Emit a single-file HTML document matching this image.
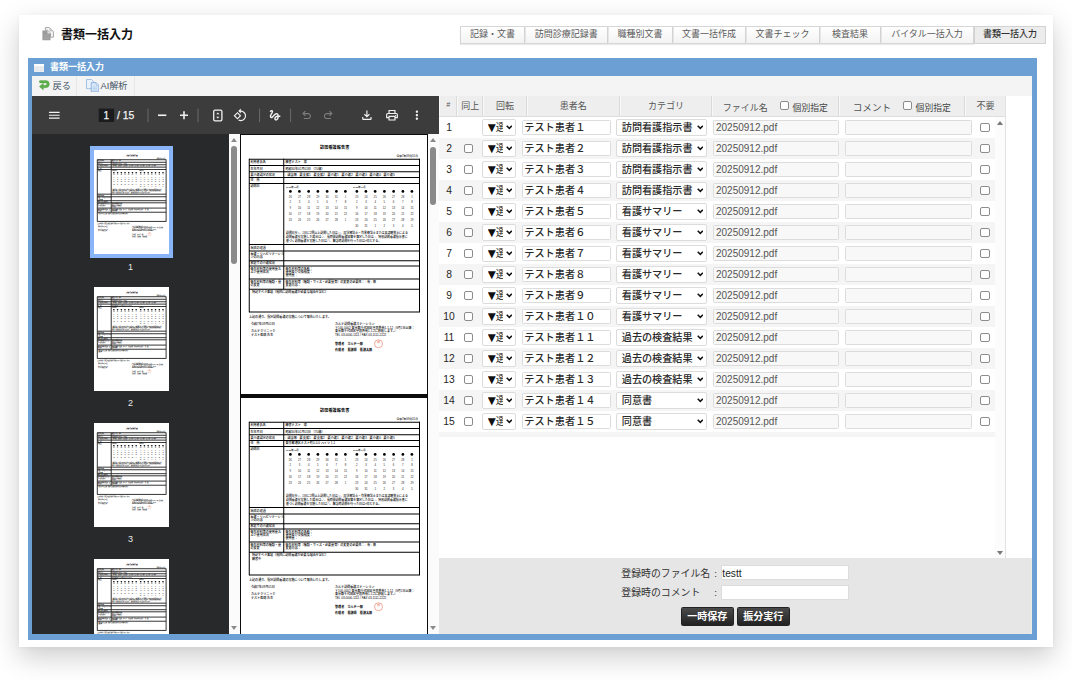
<!DOCTYPE html>
<html lang="ja">
<head>
<meta charset="utf-8">
<title>書類一括入力</title>
<style>

*{box-sizing:border-box;margin:0;padding:0}
html,body{width:1072px;height:680px;overflow:hidden;background:#fff}
body{font-family:"Liberation Sans","Noto Sans CJK JP",sans-serif;font-size:10px;color:#333;position:relative}
#card{position:absolute;left:19px;top:15px;width:1034px;height:632px;background:#fff;box-shadow:0 10px 26px rgba(0,0,0,.2),0 1px 4px rgba(0,0,0,.04)}
#titleicon{position:absolute;left:22.5px;top:11.5px;width:12px;height:14px}
#title{position:absolute;left:42px;top:11px;height:18px;line-height:18px;font-size:12px;font-weight:bold;color:#111;white-space:nowrap}
#tabs{position:absolute;left:0;top:11px;height:17.5px}
.tab{position:absolute;top:0;height:17.5px;line-height:15.5px;border:1px solid #d6d6d6;border-left-color:#e6e6e6;background:linear-gradient(#ffffff,#f3f3f3);font-size:9px;color:#5a5a5a;text-align:center;white-space:nowrap;box-shadow:0 1px 1px rgba(0,0,0,.08)}
.tab:first-child{border-left-color:#d6d6d6}
.tab.act{background:#ececec;color:#333;font-weight:500;border-color:#d2d2d2;box-shadow:none}
#panel{position:absolute;left:8.5px;top:42.5px;width:1009.5px;height:582.5px;background:#6c9fd3}
#panelicon{position:absolute;left:6.2px;top:6px;width:10px;height:8px}
#paneltitle{position:absolute;left:22.5px;top:2.5px;height:14px;line-height:14px;font-size:9px;font-weight:bold;color:#fff;white-space:nowrap}
#inner{position:absolute;left:4.5px;top:18.9px;width:1000px;height:558.1px;background:#fff;overflow:hidden}
#tbar{position:absolute;left:0;top:0;width:1000px;height:19.35px;background:#f4f4f4}
.tbtn{position:absolute;top:0;height:19.35px;border-right:1px solid #e7e7e7}
.tbtn .ico{position:absolute;display:block}
.tbtn .lbl{position:absolute;top:0;height:19.35px;line-height:20.3px;font-size:9.2px;color:#445566;white-space:nowrap}
#pdf{position:absolute;left:0;top:19.35px;width:406.75px;height:538.75px;background:#28292a;overflow:hidden}
#pdfbar{position:absolute;left:0;top:0;width:406.75px;height:38px;background:#3c3c3c}
#side{position:absolute;left:0;top:38px;width:197px;height:500.75px;background:#28292a;overflow:hidden}
.thumb{position:absolute;left:61.5px;width:75.3px;height:104px;background:#fff;overflow:hidden}
.thumb.cur{outline:4px solid #8ab4f8}
.thumbpage{position:absolute;left:0;top:0;width:746px;height:1036px;transform:scale(.1009);transform-origin:0 0}
.thumblabel{position:absolute;left:0;width:197px;text-align:center;font-size:9px;line-height:11px;height:11px;color:#e8e8e8}
.vscroll{position:absolute;top:38px;height:500.75px;width:10.75px;background:#fbfbfb}
.vscroll b{position:absolute;left:2.4px;width:6px;border-radius:3px;background:#8a8a8a;display:block}
.vscroll i{position:absolute;left:2px;width:0;height:0;border-left:3.4px solid transparent;border-right:3.4px solid transparent;display:block}
.vscroll i.up{top:4px;border-bottom:4px solid #8a8a8a}
.vscroll i.down{bottom:4px;border-top:4px solid #8a8a8a}
#sidescroll{left:197px}
#mainscroll{left:395.75px;width:11px}
#main{position:absolute;left:207.75px;top:38px;width:188px;height:500.75px;background:#0c0c0c;overflow:hidden}
.mpage{position:absolute;left:1.25px;width:186px;height:259px;background:#fff;overflow:hidden}
.mpage>.doc{transform:scale(.25);transform-origin:0 0}
/* document page drawn at 4x: 746 x 1036 */
.doc{position:absolute;left:0;top:0;width:746px;height:1036px;background:#fff;color:#000;font-weight:500;font-family:"Liberation Sans","Noto Sans CJK JP",sans-serif;font-size:12.2px;line-height:12px}
.doc .t{position:absolute;white-space:nowrap}
.doc .h{position:absolute;left:32px;width:683px;height:4px;background:#000}
.doc .v{position:absolute;width:4px;background:#000}
.thumbpage .doc .h{height:9px;margin-top:-2.5px;background:#222}
.thumbpage .doc .v{width:9px;margin-left:-2.5px;background:#222}
.thumbpage .doc .dot{width:16px;height:16px;border-radius:8px;margin:-2.5px 0 0 -2.5px}
.thumbpage .doc{font-weight:bold}
.doc .dot{position:absolute;width:11px;height:11px;border-radius:6px;background:#000}
.doc .n{position:absolute;width:30px;text-align:center;font-size:11px;color:#2a2420}
.doc .stamp{position:absolute;left:533px;top:818px;width:34px;height:34px;border:2px solid #e2583a;border-radius:17px;color:#e2583a;font-size:11px;line-height:14px;text-align:center;padding-top:2px}
/* table */
#tbl{position:absolute;left:406.75px;top:19.35px;width:567.5px;height:462.25px;border-right:1px solid #e2e2e2;overflow:hidden;background:#fff}
#thead{position:absolute;left:0;top:0;width:567px;height:21.25px;background:#eeeeee;border-bottom:1px solid #dddddd}
.th{position:absolute;top:0;height:20.25px;border-right:1px solid #dadada;border-left:1px solid #f8f8f8;font-size:9px;color:#555;white-space:nowrap}
.th span{position:absolute;white-space:nowrap}
.row{position:absolute;left:0;width:556px;height:21px}
.row.g{background:#f5f5f5}
.row .no{position:absolute;left:0;width:20.5px;text-align:center;top:0;height:21px;line-height:21px;font-size:10.3px;color:#262626}
.cb{position:absolute;width:9px;height:9px;border:1px solid #8c8c8c;border-radius:2px;background:#fff}
.sel{position:absolute;top:2.4px;height:16.4px;border:1px solid #dcdcdc;border-radius:2px;background:#fff;overflow:hidden;font-size:10px;line-height:16.2px;color:#2a2a2a;white-space:nowrap;font-weight:500}
.tri{font-family:"DejaVu Sans",sans-serif;font-size:10.4px;letter-spacing:-.2px}
.sel svg{position:absolute;right:2.7px;top:4.6px}
.inp{position:absolute;top:3.1px;height:14.8px;border:1px solid #dcdcdc;border-radius:1.5px;background:#fff;font-size:10.2px;line-height:14px;color:#2a2a2a;white-space:nowrap;overflow:hidden;font-weight:500}
.inp.dis{background:#f8f8f8;color:#555;font-weight:400;font-size:10px;top:3.3px;height:14.7px;line-height:14.4px}
#tscroll{position:absolute;left:556px;top:21.25px;width:11px;height:441px;background:#fcfcfc}
#tscroll i{position:absolute;left:2.2px;width:0;height:0;border-left:3.3px solid transparent;border-right:3.3px solid transparent;display:block}
#tscroll i.up{top:4.2px;border-bottom:4.4px solid #777}
#tscroll i.down{bottom:2.6px;border-top:4.6px solid #777}
#foot{position:absolute;left:406.75px;top:481.6px;width:593.25px;height:76.5px;background:#e6e6e6;border-right:1px solid #efece7}
#foot .fl{position:absolute;height:15px;line-height:15px;font-size:9.9px;color:#333;white-space:nowrap}
#foot .fi{position:absolute;left:281.75px;width:128.3px;height:14.6px;border:1px solid #dcdcdc;background:#fff;font-size:10.2px;line-height:14px;padding:.9px 0 0 .8px;color:#222}
.btn{position:absolute;top:49px;height:18.6px;line-height:17px;border:1px solid #222;border-radius:1.5px;background:linear-gradient(#4a4a4a,#222);color:#fff;font-weight:bold;font-size:10px;text-align:center;white-space:nowrap}

</style>
</head>
<body>
<div id="card">
  <div id="titleicon"><svg width="12" height="14" viewBox="0 0 12 14" style="display:block"><path d="M3.300 0.600H7.400L11.400 4.600V10.200H8.600V6.200L5.600 3.300H3.300z" fill="#fafafa" stroke="#a4a4a4" stroke-width="1" stroke-linejoin="round"/><path d="M7.400 0.600V4.600H11.400z" fill="#c9c9c9"/><path d="M0.400 3.400H5.500L8.500 6.400V13.300H0.400z" fill="#9b9b9b"/><path d="M5.500 3.400V6.400H8.500z" fill="#e3e3e3"/><path d="M1.600 8.300h5.600v.7H1.600zM1.600 10h5.600v.7H1.600zM1.600 11.600h5.600v.6H1.600z" fill="#a9a9a9"/></svg></div>
  <div id="title">書類一括入力</div>
  <div id="tabs">
<div class="tab" style="left:441px;width:65px">記録・文書</div>
<div class="tab" style="left:506px;width:82.5px">訪問診療記録書</div>
<div class="tab" style="left:588.5px;width:65.0px">職種別文書</div>
<div class="tab" style="left:653.5px;width:73.0px">文書一括作成</div>
<div class="tab" style="left:726.5px;width:74.0px">文書チェック</div>
<div class="tab" style="left:800.5px;width:61.0px">検査結果</div>
<div class="tab" style="left:861.5px;width:93.10000000000002px">バイタル一括入力</div>
<div class="tab act" style="left:954.6px;width:72.89999999999998px">書類一括入力</div>
  </div>
  <div id="panel">
    <div id="panelicon"><svg width="10.4" height="8" viewBox="0 0 10.4 8" style="display:block"><rect x="0" y="0" width="10.400" height="8" rx=".8" fill="#f2f4f7"/><rect x="0" y="0" width="10.400" height="1.800" rx=".8" fill="#ffffff"/><path d="M0 3.300h10.400M0 5.200h10.400M0 6.900h10.400" stroke="#d3d8df" stroke-width=".5" fill="none"/><path d="M3.200 2v6M6.800 2v6" stroke="#dde1e7" stroke-width=".5" fill="none"/></svg></div>
    <div id="paneltitle">書類一括入力</div>
    <div id="inner">
      <div id="tbar">
        <div class="tbtn" style="left:0;width:44.5px"><span class="ico" style="left:7px;top:4px"><svg width="11.4" height="10.6" viewBox="0 0 11.4 10.6" style="display:block"><path d="M1.500 0.400H6.700A3.700 3.700 0 0 1 6.700 7.800H4.300V9.900L0.300 6.500L4.300 3.200V5.200H6.700A1.150 1.150 0 0 0 6.700 2.900H1.500A1.250 1.250 0 0 1 1.500 0.400z" fill="#5fae4e" stroke="#4c9a3d" stroke-width=".35" stroke-linejoin="round"/></svg></span><span class="lbl" style="left:20.5px">戻る</span></div>
        <div class="tbtn" style="left:45.5px;width:57.2px"><span class="ico" style="left:8.600px;top:2.700px"><svg width="13.4" height="13.4" viewBox="0 0 13.4 13.4" style="display:block"><path d="M0.500 0.500h5l2.400 2.400v6.800H0.500z" fill="#eaf2fb" stroke="#8fb2dc" stroke-width=".8" stroke-linejoin="round"/><path d="M5.200 3.600h5l2.600 2.600v6.700H5.200z" fill="#d9e8f8" stroke="#7ea7d8" stroke-width=".8" stroke-linejoin="round"/><path d="M10.200 3.600v2.600h2.600" fill="#f4f8fd" stroke="#7ea7d8" stroke-width=".6" stroke-linejoin="round"/><path d="M6.600 8h4.600M6.600 9.600h4.600M6.600 11.200h4.600" stroke="#a8c4e6" stroke-width=".6"/></svg></span><span class="lbl" style="left:23px">AI解析</span></div>
      </div>
      <div id="pdf">
        <div id="pdfbar"><svg width="406.75" height="38" viewBox="0 0 406.75 38" style="position:absolute;left:0;top:0;display:block"><path transform="translate(15.20 12.15) scale(0.5917)" fill="#f1f1f1" d="M3 18h18v-2H3v2zm0-5h18v-2H3v2zm0-7v2h18V6H3z"/><rect x="66.75" y="12.6" width="15.3" height="13.4" fill="#191b1c"/><text x="74.400" y="22.800" text-anchor="middle" font-family="Liberation Sans, sans-serif" font-size="10" fill="#f4f4f4" stroke="#f4f4f4" stroke-width=".25">1</text><text x="85" y="22.800" font-family="Liberation Sans, sans-serif" font-size="10.300" fill="#f4f4f4" stroke="#f4f4f4" stroke-width=".25">/ 15</text><rect x="115.5" y="12.6" width="1" height="13.6" fill="#6b6b6b"/><rect x="165.5" y="12.6" width="1" height="13.6" fill="#6b6b6b"/><rect x="227.1" y="12.6" width="1" height="13.6" fill="#6b6b6b"/><rect x="258.1" y="12.6" width="1" height="13.6" fill="#6b6b6b"/><rect x="126" y="18.450" width="8.300" height="1.600" fill="#f1f1f1"/><path d="M148 18.450h3.200v-3.200h1.600v3.200h3.200v1.600h-3.200v3.200h-1.600v-3.200h-3.200z" fill="#f1f1f1"/><rect x="181.7" y="14.2" width="8.2" height="10.6" rx="1.3" fill="none" stroke="#f1f1f1" stroke-width="1.3"/><path d="M184.2 18.2l1.6-1.7 1.6 1.7zM184.2 20.8l1.6 1.7 1.6-1.7z" fill="#f1f1f1"/><path transform="translate(201.10 12.15) scale(0.5917)" fill="#f1f1f1" d="M7.34 6.41L.86 12.9l6.49 6.48 6.49-6.48-6.5-6.49zM3.69 12.9l3.66-3.66L11 12.9l-3.66 3.66-3.65-3.66zm15.67-6.26C17.61 4.88 15.3 4 13 4V.76L8.76 5 13 9.24V6c1.79 0 3.58.68 4.95 2.05 2.73 2.73 2.73 7.17 0 9.9C16.58 19.32 14.79 20 13 20c-.97 0-1.94-.21-2.84-.61l-1.49 1.49C10.02 21.62 11.51 22 13 22c2.3 0 4.61-.88 6.36-2.64 3.52-3.51 3.52-9.21 0-12.72z"/><path transform="translate(235.90 12.15) scale(0.5917)" fill="#f1f1f1" d="M4.59 6.89c.7-.71 1.4-1.35 1.71-1.22.5.2 0 1.03-.3 1.52-.25.42-2.86 3.89-2.86 6.31 0 1.28.48 2.34 1.34 2.98.75.56 1.74.73 2.64.46 1.07-.31 1.95-1.4 3.06-2.77 1.21-1.49 2.83-3.44 4.08-3.44 1.63 0 1.65 1.01 1.76 1.79-3.78.64-5.38 3.67-5.38 5.37 0 1.7 1.44 3.09 3.21 3.09 1.63 0 4.29-1.33 4.69-6.1H21v-2.5h-2.47c-.15-1.65-1.09-4.2-4.03-4.2-2.25 0-4.18 1.91-4.94 2.84-.58.73-2.06 2.48-2.29 2.72-.25.3-.68.84-1.11.84-.45 0-.72-.83-.36-1.92.35-1.09 1.4-2.86 1.85-3.52.78-1.14 1.3-1.92 1.3-3.28C8.95 3.69 7.31 3 6.44 3 5.12 3 3.97 4 3.72 4.25c-.36.36-.66.66-.88.93l1.75 1.71zm9.29 11.66c-.31 0-.74-.26-.74-.72 0-.6.73-2.2 2.87-2.76-.3 2.69-1.43 3.48-2.13 3.48z"/><path transform="translate(268.00 12.65) scale(0.5500)" fill="#7d7d7d" d="M7 19v-2h7.1q1.575 0 2.737-1 1.163-1 1.163-2.5t-1.163-2.5q-1.162-1-2.737-1H7.8l2.6 2.6L9 14 4 9l5-5 1.4 1.4L7.8 8h6.3q2.425 0 4.163 1.575Q20 11.15 20 13.5t-1.737 3.925Q16.525 19 14.1 19Z"/><path transform="translate(289.60 12.65) scale(0.5500)" fill="#7d7d7d" d="M9.9 19q-2.425 0-4.163-1.575Q4 15.85 4 13.5t1.737-3.925Q7.475 8 9.9 8h6.3l-2.6-2.6L15 4l5 5-5 5-1.4-1.4 2.6-2.6H9.9q-1.575 0-2.737 1Q6 12 6 13.5T7.163 16q1.162 1 2.737 1H17v2Z"/><path transform="translate(327.80 12.15) scale(0.5917)" fill="#f1f1f1" d="M12 16l-5-5 1.4-1.45 2.6 2.6V4h2v8.15l2.6-2.6L17 11Zm-6 4q-.825 0-1.412-.587Q4 18.825 4 18v-3h2v3h12v-3h2v3q0 .825-.587 1.413Q18.825 20 18 20Z"/><path transform="translate(352.90 12.15) scale(0.5917)" fill="#f1f1f1" d="M19 8h-1V3H6v5H5c-1.66 0-3 1.34-3 3v6h4v4h12v-4h4v-6c0-1.66-1.34-3-3-3zM8 5h8v3H8V5zm8 14H8v-4h8v4zm2-4v-2H6v2H4v-4c0-.55.45-1 1-1h14c.55 0 1 .45 1 1v4h-2zM18 11.5a1 1 0 100 2 1 1 0 000-2z"/><path transform="translate(377.80 12.15) scale(0.5917)" fill="#f1f1f1" d="M12 8c1.1 0 2-.9 2-2s-.9-2-2-2-2 .9-2 2 .9 2 2 2zm0 2c-1.1 0-2 .9-2 2s.9 2 2 2 2-.9 2-2-.9-2-2-2zm0 6c-1.1 0-2 .9-2 2s.9 2 2 2 2-.9 2-2-.9-2-2-2z"/></svg></div>
        <div id="side">
<div class="thumb cur" style="top:16.25px"><div class="thumbpage"><div class="doc"><div class="t" style="left:316px;top:43px;font-size:16.5px;font-weight:bold;letter-spacing:.3px">訪問看護報告書</div><div class="t" style="left:622px;top:78px;font-size:11px">令和7年09月01日</div><div class="h" style="top:94.5px"></div><div class="h" style="top:119.5px"></div><div class="h" style="top:144.5px"></div><div class="h" style="top:167.5px"></div><div class="h" style="top:191.5px"></div><div class="h" style="top:435.5px"></div><div class="h" style="top:461.5px"></div><div class="h" style="top:500.5px"></div><div class="h" style="top:521.5px"></div><div class="h" style="top:573.5px"></div><div class="h" style="top:614.5px"></div><div class="h" style="top:705.5px"></div><div class="v" style="left:30.5px;top:94.5px;height:614px"></div><div class="v" style="left:712px;top:94.5px;height:614px"></div><div class="v" style="left:168.5px;top:94.5px;height:523px"></div><div class="t" style="left:38px;top:102.5px;">利用者氏名</div><div class="t" style="left:38px;top:127.5px;">生年月日</div><div class="t" style="left:38px;top:151.5px;">要介護認定の状況</div><div class="t" style="left:38px;top:175px;">住　所</div><div class="t" style="left:38px;top:199px;">訪問日</div><div class="t" style="left:38px;top:444px;">病状の経過</div><div class="t" style="left:38px;top:470px;">看護・リハビリテーショ</div><div class="t" style="left:38px;top:483px;">ンの内容</div><div class="t" style="left:38px;top:506.5px;">家庭での介護状況</div><div class="t" style="left:38px;top:529px;">衛生材料等の使用量お</div><div class="t" style="left:38px;top:542px;">よび使用状況</div><div class="t" style="left:38px;top:582px;">衛生材料等の種類・量</div><div class="t" style="left:38px;top:595px;">の変更</div><div class="t" style="left:178px;top:102.5px;">練習テスト　様</div><div class="t" style="left:178px;top:127.5px;">昭和30年01月01日 （70歳）</div><div class="t" style="left:178px;top:151.5px;font-size:12.6px">□該当無 □要支援1 □要支援2 □要介護1 □要介護2 □要介護3 □要介護4 □要介護5</div><div class="t" style="left:180px;top:204px;font-size:9.5px">2025年08月</div><div class="t" style="left:448px;top:204px;font-size:9.5px">2025年09月</div><div class="dot" style="left:191.5px;top:220px"></div><div class="dot" style="left:228.3px;top:220px"></div><div class="dot" style="left:265.1px;top:220px"></div><div class="dot" style="left:301.9px;top:220px"></div><div class="dot" style="left:338.7px;top:220px"></div><div class="dot" style="left:375.5px;top:220px"></div><div class="dot" style="left:412.3px;top:220px"></div><div class="n" style="left:182.0px;top:240px">26</div><div class="n" style="left:218.8px;top:240px">27</div><div class="n" style="left:255.6px;top:240px">28</div><div class="n" style="left:292.4px;top:240px">29</div><div class="n" style="left:329.2px;top:240px">30</div><div class="n" style="left:366.0px;top:240px">31</div><div class="n" style="left:402.8px;top:240px">1</div><div class="n" style="left:182.0px;top:263px">2</div><div class="n" style="left:218.8px;top:263px">3</div><div class="n" style="left:255.6px;top:263px">4</div><div class="n" style="left:292.4px;top:263px">5</div><div class="n" style="left:329.2px;top:263px">6</div><div class="n" style="left:366.0px;top:263px">7</div><div class="n" style="left:402.8px;top:263px">8</div><div class="n" style="left:182.0px;top:286px">9</div><div class="n" style="left:218.8px;top:286px">10</div><div class="n" style="left:255.6px;top:286px">11</div><div class="n" style="left:292.4px;top:286px">12</div><div class="n" style="left:329.2px;top:286px">13</div><div class="n" style="left:366.0px;top:286px">14</div><div class="n" style="left:402.8px;top:286px">15</div><div class="n" style="left:182.0px;top:310px">16</div><div class="n" style="left:218.8px;top:310px">17</div><div class="n" style="left:255.6px;top:310px">18</div><div class="n" style="left:292.4px;top:310px">19</div><div class="n" style="left:329.2px;top:310px">20</div><div class="n" style="left:366.0px;top:310px">21</div><div class="n" style="left:402.8px;top:310px">22</div><div class="n" style="left:182.0px;top:334px">23</div><div class="n" style="left:218.8px;top:334px">24</div><div class="n" style="left:255.6px;top:334px">25</div><div class="n" style="left:292.4px;top:334px">26</div><div class="n" style="left:329.2px;top:334px">27</div><div class="n" style="left:366.0px;top:334px">28</div><div class="n" style="left:402.8px;top:334px">1</div><div class="dot" style="left:457.5px;top:220px"></div><div class="dot" style="left:494.3px;top:220px"></div><div class="dot" style="left:531.1px;top:220px"></div><div class="dot" style="left:567.9px;top:220px"></div><div class="dot" style="left:604.7px;top:220px"></div><div class="dot" style="left:641.5px;top:220px"></div><div class="dot" style="left:678.3px;top:220px"></div><div class="n" style="left:448.0px;top:240px">23</div><div class="n" style="left:484.8px;top:240px">24</div><div class="n" style="left:521.6px;top:240px">25</div><div class="n" style="left:558.4px;top:240px">26</div><div class="n" style="left:595.2px;top:240px">27</div><div class="n" style="left:632.0px;top:240px">28</div><div class="n" style="left:668.8px;top:240px">1</div><div class="n" style="left:448.0px;top:263px">2</div><div class="n" style="left:484.8px;top:263px">3</div><div class="n" style="left:521.6px;top:263px">4</div><div class="n" style="left:558.4px;top:263px">5</div><div class="n" style="left:595.2px;top:263px">6</div><div class="n" style="left:632.0px;top:263px">7</div><div class="n" style="left:668.8px;top:263px">8</div><div class="n" style="left:448.0px;top:286px">9</div><div class="n" style="left:484.8px;top:286px">10</div><div class="n" style="left:521.6px;top:286px">11</div><div class="n" style="left:558.4px;top:286px">12</div><div class="n" style="left:595.2px;top:286px">13</div><div class="n" style="left:632.0px;top:286px">14</div><div class="n" style="left:668.8px;top:286px">15</div><div class="n" style="left:448.0px;top:310px">16</div><div class="n" style="left:484.8px;top:310px">17</div><div class="n" style="left:521.6px;top:310px">18</div><div class="n" style="left:558.4px;top:310px">19</div><div class="n" style="left:595.2px;top:310px">20</div><div class="n" style="left:632.0px;top:310px">21</div><div class="n" style="left:668.8px;top:310px">22</div><div class="n" style="left:448.0px;top:334px">23</div><div class="n" style="left:484.8px;top:334px">24</div><div class="n" style="left:521.6px;top:334px">25</div><div class="n" style="left:558.4px;top:334px">26</div><div class="n" style="left:595.2px;top:334px">27</div><div class="n" style="left:632.0px;top:334px">28</div><div class="n" style="left:668.8px;top:334px">29</div><div class="n" style="left:448.0px;top:359px">30</div><div class="n" style="left:484.8px;top:359px">31</div><div class="n" style="left:521.6px;top:359px">1</div><div class="n" style="left:558.4px;top:359px">2</div><div class="n" style="left:595.2px;top:359px">3</div><div class="n" style="left:632.0px;top:359px">4</div><div class="n" style="left:668.8px;top:359px">5</div><div class="t" style="left:180px;top:385px;font-size:11.7px">訪問日を○、1日に2回以上訪問した日は◎、理学療法士・作業療法士または言語聴覚士による</div><div class="t" style="left:180px;top:401px;font-size:11.7px">訪問看護を実施した場合は◇、長時間訪問看護加算を算定した日は□、特別訪問看護指示書に</div><div class="t" style="left:180px;top:416px;font-size:11.7px">基づく訪問看護を実施した日は△、緊急時訪問を行った日は×印とする。</div><div class="t" style="left:178px;top:529px;">衛生材料等の名称：</div><div class="t" style="left:178px;top:542px;">使用及び交換頻度：</div><div class="t" style="left:178px;top:555px;">使用量：</div><div class="t" style="left:178px;top:582px;">衛生材料等（種類・サイズ・必要量等）の変更の必要性： □有 □無</div><div class="t" style="left:178px;top:595px;">変更内容：</div><div class="t" style="left:44px;top:623px;">特記すべき事項（頻回に訪問看護が必要な理由を含む）</div><div class="t" style="left:32px;top:723px;font-size:12.2px">上記の通り、指定訪問看護の実施について報告いたします。</div><div class="t" style="left:40px;top:751px;">令和7年09月01日</div><div class="t" style="left:40px;top:779px;">カルテクリニック</div><div class="t" style="left:40px;top:794px;">テスト医師 先生</div><div class="t" style="left:376px;top:751px;">カルテ訪問看護ステーション</div><div class="t" style="left:376px;top:765px;font-size:12px">〒100-0002 東京都千代田区皇居外苑1-1-12（9月1日以降：</div><div class="t" style="left:376px;top:779px;font-size:12px">東京都千代田区皇居外苑1-1-2に移転します。）</div><div class="t" style="left:376px;top:794px;font-size:12px">TEL 03-0000-1111 / FAX 03-1111-2222</div><div class="t" style="left:376px;top:830px;font-size:12.4px;font-weight:bold">管理者　カルテ一郎</div><div class="t" style="left:376px;top:852px;font-size:12.4px;font-weight:bold">作成者　看護師　看護太郎</div><div class="stamp">印</div></div></div></div>
<div class="thumblabel" style="top:127.85px">1</div>
<div class="thumb" style="top:153.05px"><div class="thumbpage"><div class="doc"><div class="t" style="left:316px;top:43px;font-size:16.5px;font-weight:bold;letter-spacing:.3px">訪問看護報告書</div><div class="t" style="left:622px;top:78px;font-size:11px">令和7年09月01日</div><div class="h" style="top:94.5px"></div><div class="h" style="top:119.5px"></div><div class="h" style="top:144.5px"></div><div class="h" style="top:167.5px"></div><div class="h" style="top:191.5px"></div><div class="h" style="top:435.5px"></div><div class="h" style="top:461.5px"></div><div class="h" style="top:500.5px"></div><div class="h" style="top:521.5px"></div><div class="h" style="top:573.5px"></div><div class="h" style="top:614.5px"></div><div class="h" style="top:705.5px"></div><div class="v" style="left:30.5px;top:94.5px;height:614px"></div><div class="v" style="left:712px;top:94.5px;height:614px"></div><div class="v" style="left:168.5px;top:94.5px;height:523px"></div><div class="t" style="left:38px;top:102.5px;">利用者氏名</div><div class="t" style="left:38px;top:127.5px;">生年月日</div><div class="t" style="left:38px;top:151.5px;">要介護認定の状況</div><div class="t" style="left:38px;top:175px;">住　所</div><div class="t" style="left:38px;top:199px;">訪問日</div><div class="t" style="left:38px;top:444px;">病状の経過</div><div class="t" style="left:38px;top:470px;">看護・リハビリテーショ</div><div class="t" style="left:38px;top:483px;">ンの内容</div><div class="t" style="left:38px;top:506.5px;">家庭での介護状況</div><div class="t" style="left:38px;top:529px;">衛生材料等の使用量お</div><div class="t" style="left:38px;top:542px;">よび使用状況</div><div class="t" style="left:38px;top:582px;">衛生材料等の種類・量</div><div class="t" style="left:38px;top:595px;">の変更</div><div class="t" style="left:178px;top:102.5px;">練習テスト　様</div><div class="t" style="left:178px;top:127.5px;">昭和30年01月01日 （70歳）</div><div class="t" style="left:178px;top:151.5px;font-size:12.6px">□該当無 □要支援1 □要支援2 □要介護1 □要介護2 □要介護3 □要介護4 □要介護5</div><div class="t" style="left:178px;top:175px;">東京都港区テスト町0-0-0 ハイツ 1-1</div><div class="t" style="left:180px;top:204px;font-size:9.5px">2025年08月</div><div class="t" style="left:448px;top:204px;font-size:9.5px">2025年09月</div><div class="dot" style="left:191.5px;top:220px"></div><div class="dot" style="left:228.3px;top:220px"></div><div class="dot" style="left:265.1px;top:220px"></div><div class="dot" style="left:301.9px;top:220px"></div><div class="dot" style="left:338.7px;top:220px"></div><div class="dot" style="left:375.5px;top:220px"></div><div class="dot" style="left:412.3px;top:220px"></div><div class="n" style="left:182.0px;top:240px">26</div><div class="n" style="left:218.8px;top:240px">27</div><div class="n" style="left:255.6px;top:240px">28</div><div class="n" style="left:292.4px;top:240px">29</div><div class="n" style="left:329.2px;top:240px">30</div><div class="n" style="left:366.0px;top:240px">31</div><div class="n" style="left:402.8px;top:240px">1</div><div class="n" style="left:182.0px;top:263px">2</div><div class="n" style="left:218.8px;top:263px">3</div><div class="n" style="left:255.6px;top:263px">4</div><div class="n" style="left:292.4px;top:263px">5</div><div class="n" style="left:329.2px;top:263px">6</div><div class="n" style="left:366.0px;top:263px">7</div><div class="n" style="left:402.8px;top:263px">8</div><div class="n" style="left:182.0px;top:286px">9</div><div class="n" style="left:218.8px;top:286px">10</div><div class="n" style="left:255.6px;top:286px">11</div><div class="n" style="left:292.4px;top:286px">12</div><div class="n" style="left:329.2px;top:286px">13</div><div class="n" style="left:366.0px;top:286px">14</div><div class="n" style="left:402.8px;top:286px">15</div><div class="n" style="left:182.0px;top:310px">16</div><div class="n" style="left:218.8px;top:310px">17</div><div class="n" style="left:255.6px;top:310px">18</div><div class="n" style="left:292.4px;top:310px">19</div><div class="n" style="left:329.2px;top:310px">20</div><div class="n" style="left:366.0px;top:310px">21</div><div class="n" style="left:402.8px;top:310px">22</div><div class="n" style="left:182.0px;top:334px">23</div><div class="n" style="left:218.8px;top:334px">24</div><div class="n" style="left:255.6px;top:334px">25</div><div class="n" style="left:292.4px;top:334px">26</div><div class="n" style="left:329.2px;top:334px">27</div><div class="n" style="left:366.0px;top:334px">28</div><div class="n" style="left:402.8px;top:334px">1</div><div class="dot" style="left:457.5px;top:220px"></div><div class="dot" style="left:494.3px;top:220px"></div><div class="dot" style="left:531.1px;top:220px"></div><div class="dot" style="left:567.9px;top:220px"></div><div class="dot" style="left:604.7px;top:220px"></div><div class="dot" style="left:641.5px;top:220px"></div><div class="dot" style="left:678.3px;top:220px"></div><div class="n" style="left:448.0px;top:240px">23</div><div class="n" style="left:484.8px;top:240px">24</div><div class="n" style="left:521.6px;top:240px">25</div><div class="n" style="left:558.4px;top:240px">26</div><div class="n" style="left:595.2px;top:240px">27</div><div class="n" style="left:632.0px;top:240px">28</div><div class="n" style="left:668.8px;top:240px">1</div><div class="n" style="left:448.0px;top:263px">2</div><div class="n" style="left:484.8px;top:263px">3</div><div class="n" style="left:521.6px;top:263px">4</div><div class="n" style="left:558.4px;top:263px">5</div><div class="n" style="left:595.2px;top:263px">6</div><div class="n" style="left:632.0px;top:263px">7</div><div class="n" style="left:668.8px;top:263px">8</div><div class="n" style="left:448.0px;top:286px">9</div><div class="n" style="left:484.8px;top:286px">10</div><div class="n" style="left:521.6px;top:286px">11</div><div class="n" style="left:558.4px;top:286px">12</div><div class="n" style="left:595.2px;top:286px">13</div><div class="n" style="left:632.0px;top:286px">14</div><div class="n" style="left:668.8px;top:286px">15</div><div class="n" style="left:448.0px;top:310px">16</div><div class="n" style="left:484.8px;top:310px">17</div><div class="n" style="left:521.6px;top:310px">18</div><div class="n" style="left:558.4px;top:310px">19</div><div class="n" style="left:595.2px;top:310px">20</div><div class="n" style="left:632.0px;top:310px">21</div><div class="n" style="left:668.8px;top:310px">22</div><div class="n" style="left:448.0px;top:334px">23</div><div class="n" style="left:484.8px;top:334px">24</div><div class="n" style="left:521.6px;top:334px">25</div><div class="n" style="left:558.4px;top:334px">26</div><div class="n" style="left:595.2px;top:334px">27</div><div class="n" style="left:632.0px;top:334px">28</div><div class="n" style="left:668.8px;top:334px">29</div><div class="n" style="left:448.0px;top:359px">30</div><div class="n" style="left:484.8px;top:359px">31</div><div class="n" style="left:521.6px;top:359px">1</div><div class="n" style="left:558.4px;top:359px">2</div><div class="n" style="left:595.2px;top:359px">3</div><div class="n" style="left:632.0px;top:359px">4</div><div class="n" style="left:668.8px;top:359px">5</div><div class="t" style="left:180px;top:385px;font-size:11.7px">訪問日を○、1日に2回以上訪問した日は◎、理学療法士・作業療法士または言語聴覚士による</div><div class="t" style="left:180px;top:401px;font-size:11.7px">訪問看護を実施した場合は◇、長時間訪問看護加算を算定した日は□、特別訪問看護指示書に</div><div class="t" style="left:180px;top:416px;font-size:11.7px">基づく訪問看護を実施した日は△、緊急時訪問を行った日は×印とする。</div><div class="t" style="left:178px;top:529px;">衛生材料等の名称：</div><div class="t" style="left:178px;top:542px;">使用及び交換頻度：</div><div class="t" style="left:178px;top:555px;">使用量：</div><div class="t" style="left:178px;top:582px;">衛生材料等（種類・サイズ・必要量等）の変更の必要性： □有 □無</div><div class="t" style="left:178px;top:595px;">変更内容：</div><div class="t" style="left:44px;top:623px;">特記すべき事項（頻回に訪問看護が必要な理由を含む）</div><div class="t" style="left:44px;top:637px;">練習中</div><div class="t" style="left:32px;top:723px;font-size:12.2px">上記の通り、指定訪問看護の実施について報告いたします。</div><div class="t" style="left:40px;top:751px;">令和7年09月01日</div><div class="t" style="left:40px;top:779px;">カルテクリニック</div><div class="t" style="left:40px;top:794px;">テスト医師 先生</div><div class="t" style="left:376px;top:751px;">カルテ訪問看護ステーション</div><div class="t" style="left:376px;top:765px;font-size:12px">〒100-0002 東京都千代田区皇居外苑1-1-12（9月1日以降：</div><div class="t" style="left:376px;top:779px;font-size:12px">東京都千代田区皇居外苑1-1-2に移転します。）</div><div class="t" style="left:376px;top:794px;font-size:12px">TEL 03-0000-1111 / FAX 03-1111-2222</div><div class="t" style="left:376px;top:830px;font-size:12.4px;font-weight:bold">管理者　カルテ一郎</div><div class="t" style="left:376px;top:852px;font-size:12.4px;font-weight:bold">作成者　看護師　看護太郎</div><div class="stamp">印</div></div></div></div>
<div class="thumblabel" style="top:264.65px">2</div>
<div class="thumb" style="top:289.05px"><div class="thumbpage"><div class="doc"><div class="t" style="left:316px;top:43px;font-size:16.5px;font-weight:bold;letter-spacing:.3px">訪問看護報告書</div><div class="t" style="left:622px;top:78px;font-size:11px">令和7年09月01日</div><div class="h" style="top:94.5px"></div><div class="h" style="top:119.5px"></div><div class="h" style="top:144.5px"></div><div class="h" style="top:167.5px"></div><div class="h" style="top:191.5px"></div><div class="h" style="top:435.5px"></div><div class="h" style="top:461.5px"></div><div class="h" style="top:500.5px"></div><div class="h" style="top:521.5px"></div><div class="h" style="top:573.5px"></div><div class="h" style="top:614.5px"></div><div class="h" style="top:705.5px"></div><div class="v" style="left:30.5px;top:94.5px;height:614px"></div><div class="v" style="left:712px;top:94.5px;height:614px"></div><div class="v" style="left:168.5px;top:94.5px;height:523px"></div><div class="t" style="left:38px;top:102.5px;">利用者氏名</div><div class="t" style="left:38px;top:127.5px;">生年月日</div><div class="t" style="left:38px;top:151.5px;">要介護認定の状況</div><div class="t" style="left:38px;top:175px;">住　所</div><div class="t" style="left:38px;top:199px;">訪問日</div><div class="t" style="left:38px;top:444px;">病状の経過</div><div class="t" style="left:38px;top:470px;">看護・リハビリテーショ</div><div class="t" style="left:38px;top:483px;">ンの内容</div><div class="t" style="left:38px;top:506.5px;">家庭での介護状況</div><div class="t" style="left:38px;top:529px;">衛生材料等の使用量お</div><div class="t" style="left:38px;top:542px;">よび使用状況</div><div class="t" style="left:38px;top:582px;">衛生材料等の種類・量</div><div class="t" style="left:38px;top:595px;">の変更</div><div class="t" style="left:178px;top:102.5px;">練習テスト　様</div><div class="t" style="left:178px;top:127.5px;">昭和30年01月01日 （70歳）</div><div class="t" style="left:178px;top:151.5px;font-size:12.6px">□該当無 □要支援1 □要支援2 □要介護1 □要介護2 □要介護3 □要介護4 □要介護5</div><div class="t" style="left:180px;top:204px;font-size:9.5px">2025年08月</div><div class="t" style="left:448px;top:204px;font-size:9.5px">2025年09月</div><div class="dot" style="left:191.5px;top:220px"></div><div class="dot" style="left:228.3px;top:220px"></div><div class="dot" style="left:265.1px;top:220px"></div><div class="dot" style="left:301.9px;top:220px"></div><div class="dot" style="left:338.7px;top:220px"></div><div class="dot" style="left:375.5px;top:220px"></div><div class="dot" style="left:412.3px;top:220px"></div><div class="n" style="left:182.0px;top:240px">26</div><div class="n" style="left:218.8px;top:240px">27</div><div class="n" style="left:255.6px;top:240px">28</div><div class="n" style="left:292.4px;top:240px">29</div><div class="n" style="left:329.2px;top:240px">30</div><div class="n" style="left:366.0px;top:240px">31</div><div class="n" style="left:402.8px;top:240px">1</div><div class="n" style="left:182.0px;top:263px">2</div><div class="n" style="left:218.8px;top:263px">3</div><div class="n" style="left:255.6px;top:263px">4</div><div class="n" style="left:292.4px;top:263px">5</div><div class="n" style="left:329.2px;top:263px">6</div><div class="n" style="left:366.0px;top:263px">7</div><div class="n" style="left:402.8px;top:263px">8</div><div class="n" style="left:182.0px;top:286px">9</div><div class="n" style="left:218.8px;top:286px">10</div><div class="n" style="left:255.6px;top:286px">11</div><div class="n" style="left:292.4px;top:286px">12</div><div class="n" style="left:329.2px;top:286px">13</div><div class="n" style="left:366.0px;top:286px">14</div><div class="n" style="left:402.8px;top:286px">15</div><div class="n" style="left:182.0px;top:310px">16</div><div class="n" style="left:218.8px;top:310px">17</div><div class="n" style="left:255.6px;top:310px">18</div><div class="n" style="left:292.4px;top:310px">19</div><div class="n" style="left:329.2px;top:310px">20</div><div class="n" style="left:366.0px;top:310px">21</div><div class="n" style="left:402.8px;top:310px">22</div><div class="n" style="left:182.0px;top:334px">23</div><div class="n" style="left:218.8px;top:334px">24</div><div class="n" style="left:255.6px;top:334px">25</div><div class="n" style="left:292.4px;top:334px">26</div><div class="n" style="left:329.2px;top:334px">27</div><div class="n" style="left:366.0px;top:334px">28</div><div class="n" style="left:402.8px;top:334px">1</div><div class="dot" style="left:457.5px;top:220px"></div><div class="dot" style="left:494.3px;top:220px"></div><div class="dot" style="left:531.1px;top:220px"></div><div class="dot" style="left:567.9px;top:220px"></div><div class="dot" style="left:604.7px;top:220px"></div><div class="dot" style="left:641.5px;top:220px"></div><div class="dot" style="left:678.3px;top:220px"></div><div class="n" style="left:448.0px;top:240px">23</div><div class="n" style="left:484.8px;top:240px">24</div><div class="n" style="left:521.6px;top:240px">25</div><div class="n" style="left:558.4px;top:240px">26</div><div class="n" style="left:595.2px;top:240px">27</div><div class="n" style="left:632.0px;top:240px">28</div><div class="n" style="left:668.8px;top:240px">1</div><div class="n" style="left:448.0px;top:263px">2</div><div class="n" style="left:484.8px;top:263px">3</div><div class="n" style="left:521.6px;top:263px">4</div><div class="n" style="left:558.4px;top:263px">5</div><div class="n" style="left:595.2px;top:263px">6</div><div class="n" style="left:632.0px;top:263px">7</div><div class="n" style="left:668.8px;top:263px">8</div><div class="n" style="left:448.0px;top:286px">9</div><div class="n" style="left:484.8px;top:286px">10</div><div class="n" style="left:521.6px;top:286px">11</div><div class="n" style="left:558.4px;top:286px">12</div><div class="n" style="left:595.2px;top:286px">13</div><div class="n" style="left:632.0px;top:286px">14</div><div class="n" style="left:668.8px;top:286px">15</div><div class="n" style="left:448.0px;top:310px">16</div><div class="n" style="left:484.8px;top:310px">17</div><div class="n" style="left:521.6px;top:310px">18</div><div class="n" style="left:558.4px;top:310px">19</div><div class="n" style="left:595.2px;top:310px">20</div><div class="n" style="left:632.0px;top:310px">21</div><div class="n" style="left:668.8px;top:310px">22</div><div class="n" style="left:448.0px;top:334px">23</div><div class="n" style="left:484.8px;top:334px">24</div><div class="n" style="left:521.6px;top:334px">25</div><div class="n" style="left:558.4px;top:334px">26</div><div class="n" style="left:595.2px;top:334px">27</div><div class="n" style="left:632.0px;top:334px">28</div><div class="n" style="left:668.8px;top:334px">29</div><div class="n" style="left:448.0px;top:359px">30</div><div class="n" style="left:484.8px;top:359px">31</div><div class="n" style="left:521.6px;top:359px">1</div><div class="n" style="left:558.4px;top:359px">2</div><div class="n" style="left:595.2px;top:359px">3</div><div class="n" style="left:632.0px;top:359px">4</div><div class="n" style="left:668.8px;top:359px">5</div><div class="t" style="left:180px;top:385px;font-size:11.7px">訪問日を○、1日に2回以上訪問した日は◎、理学療法士・作業療法士または言語聴覚士による</div><div class="t" style="left:180px;top:401px;font-size:11.7px">訪問看護を実施した場合は◇、長時間訪問看護加算を算定した日は□、特別訪問看護指示書に</div><div class="t" style="left:180px;top:416px;font-size:11.7px">基づく訪問看護を実施した日は△、緊急時訪問を行った日は×印とする。</div><div class="t" style="left:178px;top:529px;">衛生材料等の名称：</div><div class="t" style="left:178px;top:542px;">使用及び交換頻度：</div><div class="t" style="left:178px;top:555px;">使用量：</div><div class="t" style="left:178px;top:582px;">衛生材料等（種類・サイズ・必要量等）の変更の必要性： □有 □無</div><div class="t" style="left:178px;top:595px;">変更内容：</div><div class="t" style="left:44px;top:623px;">特記すべき事項（頻回に訪問看護が必要な理由を含む）</div><div class="t" style="left:32px;top:723px;font-size:12.2px">上記の通り、指定訪問看護の実施について報告いたします。</div><div class="t" style="left:40px;top:751px;">令和7年09月01日</div><div class="t" style="left:40px;top:779px;">カルテクリニック</div><div class="t" style="left:40px;top:794px;">テスト医師 先生</div><div class="t" style="left:376px;top:751px;">カルテ訪問看護ステーション</div><div class="t" style="left:376px;top:765px;font-size:12px">〒100-0002 東京都千代田区皇居外苑1-1-12（9月1日以降：</div><div class="t" style="left:376px;top:779px;font-size:12px">東京都千代田区皇居外苑1-1-2に移転します。）</div><div class="t" style="left:376px;top:794px;font-size:12px">TEL 03-0000-1111 / FAX 03-1111-2222</div><div class="t" style="left:376px;top:830px;font-size:12.4px;font-weight:bold">管理者　カルテ一郎</div><div class="t" style="left:376px;top:852px;font-size:12.4px;font-weight:bold">作成者　看護師　看護太郎</div><div class="stamp">印</div></div></div></div>
<div class="thumblabel" style="top:400.65px">3</div>
<div class="thumb" style="top:425.05px"><div class="thumbpage"><div class="doc"><div class="t" style="left:316px;top:43px;font-size:16.5px;font-weight:bold;letter-spacing:.3px">訪問看護報告書</div><div class="t" style="left:622px;top:78px;font-size:11px">令和7年09月01日</div><div class="h" style="top:94.5px"></div><div class="h" style="top:119.5px"></div><div class="h" style="top:144.5px"></div><div class="h" style="top:167.5px"></div><div class="h" style="top:191.5px"></div><div class="h" style="top:435.5px"></div><div class="h" style="top:461.5px"></div><div class="h" style="top:500.5px"></div><div class="h" style="top:521.5px"></div><div class="h" style="top:573.5px"></div><div class="h" style="top:614.5px"></div><div class="h" style="top:705.5px"></div><div class="v" style="left:30.5px;top:94.5px;height:614px"></div><div class="v" style="left:712px;top:94.5px;height:614px"></div><div class="v" style="left:168.5px;top:94.5px;height:523px"></div><div class="t" style="left:38px;top:102.5px;">利用者氏名</div><div class="t" style="left:38px;top:127.5px;">生年月日</div><div class="t" style="left:38px;top:151.5px;">要介護認定の状況</div><div class="t" style="left:38px;top:175px;">住　所</div><div class="t" style="left:38px;top:199px;">訪問日</div><div class="t" style="left:38px;top:444px;">病状の経過</div><div class="t" style="left:38px;top:470px;">看護・リハビリテーショ</div><div class="t" style="left:38px;top:483px;">ンの内容</div><div class="t" style="left:38px;top:506.5px;">家庭での介護状況</div><div class="t" style="left:38px;top:529px;">衛生材料等の使用量お</div><div class="t" style="left:38px;top:542px;">よび使用状況</div><div class="t" style="left:38px;top:582px;">衛生材料等の種類・量</div><div class="t" style="left:38px;top:595px;">の変更</div><div class="t" style="left:178px;top:102.5px;">練習テスト　様</div><div class="t" style="left:178px;top:127.5px;">昭和30年01月01日 （70歳）</div><div class="t" style="left:178px;top:151.5px;font-size:12.6px">□該当無 □要支援1 □要支援2 □要介護1 □要介護2 □要介護3 □要介護4 □要介護5</div><div class="t" style="left:178px;top:175px;">東京都港区テスト町0-0-0 ハイツ 1-1</div><div class="t" style="left:180px;top:204px;font-size:9.5px">2025年08月</div><div class="t" style="left:448px;top:204px;font-size:9.5px">2025年09月</div><div class="dot" style="left:191.5px;top:220px"></div><div class="dot" style="left:228.3px;top:220px"></div><div class="dot" style="left:265.1px;top:220px"></div><div class="dot" style="left:301.9px;top:220px"></div><div class="dot" style="left:338.7px;top:220px"></div><div class="dot" style="left:375.5px;top:220px"></div><div class="dot" style="left:412.3px;top:220px"></div><div class="n" style="left:182.0px;top:240px">26</div><div class="n" style="left:218.8px;top:240px">27</div><div class="n" style="left:255.6px;top:240px">28</div><div class="n" style="left:292.4px;top:240px">29</div><div class="n" style="left:329.2px;top:240px">30</div><div class="n" style="left:366.0px;top:240px">31</div><div class="n" style="left:402.8px;top:240px">1</div><div class="n" style="left:182.0px;top:263px">2</div><div class="n" style="left:218.8px;top:263px">3</div><div class="n" style="left:255.6px;top:263px">4</div><div class="n" style="left:292.4px;top:263px">5</div><div class="n" style="left:329.2px;top:263px">6</div><div class="n" style="left:366.0px;top:263px">7</div><div class="n" style="left:402.8px;top:263px">8</div><div class="n" style="left:182.0px;top:286px">9</div><div class="n" style="left:218.8px;top:286px">10</div><div class="n" style="left:255.6px;top:286px">11</div><div class="n" style="left:292.4px;top:286px">12</div><div class="n" style="left:329.2px;top:286px">13</div><div class="n" style="left:366.0px;top:286px">14</div><div class="n" style="left:402.8px;top:286px">15</div><div class="n" style="left:182.0px;top:310px">16</div><div class="n" style="left:218.8px;top:310px">17</div><div class="n" style="left:255.6px;top:310px">18</div><div class="n" style="left:292.4px;top:310px">19</div><div class="n" style="left:329.2px;top:310px">20</div><div class="n" style="left:366.0px;top:310px">21</div><div class="n" style="left:402.8px;top:310px">22</div><div class="n" style="left:182.0px;top:334px">23</div><div class="n" style="left:218.8px;top:334px">24</div><div class="n" style="left:255.6px;top:334px">25</div><div class="n" style="left:292.4px;top:334px">26</div><div class="n" style="left:329.2px;top:334px">27</div><div class="n" style="left:366.0px;top:334px">28</div><div class="n" style="left:402.8px;top:334px">1</div><div class="dot" style="left:457.5px;top:220px"></div><div class="dot" style="left:494.3px;top:220px"></div><div class="dot" style="left:531.1px;top:220px"></div><div class="dot" style="left:567.9px;top:220px"></div><div class="dot" style="left:604.7px;top:220px"></div><div class="dot" style="left:641.5px;top:220px"></div><div class="dot" style="left:678.3px;top:220px"></div><div class="n" style="left:448.0px;top:240px">23</div><div class="n" style="left:484.8px;top:240px">24</div><div class="n" style="left:521.6px;top:240px">25</div><div class="n" style="left:558.4px;top:240px">26</div><div class="n" style="left:595.2px;top:240px">27</div><div class="n" style="left:632.0px;top:240px">28</div><div class="n" style="left:668.8px;top:240px">1</div><div class="n" style="left:448.0px;top:263px">2</div><div class="n" style="left:484.8px;top:263px">3</div><div class="n" style="left:521.6px;top:263px">4</div><div class="n" style="left:558.4px;top:263px">5</div><div class="n" style="left:595.2px;top:263px">6</div><div class="n" style="left:632.0px;top:263px">7</div><div class="n" style="left:668.8px;top:263px">8</div><div class="n" style="left:448.0px;top:286px">9</div><div class="n" style="left:484.8px;top:286px">10</div><div class="n" style="left:521.6px;top:286px">11</div><div class="n" style="left:558.4px;top:286px">12</div><div class="n" style="left:595.2px;top:286px">13</div><div class="n" style="left:632.0px;top:286px">14</div><div class="n" style="left:668.8px;top:286px">15</div><div class="n" style="left:448.0px;top:310px">16</div><div class="n" style="left:484.8px;top:310px">17</div><div class="n" style="left:521.6px;top:310px">18</div><div class="n" style="left:558.4px;top:310px">19</div><div class="n" style="left:595.2px;top:310px">20</div><div class="n" style="left:632.0px;top:310px">21</div><div class="n" style="left:668.8px;top:310px">22</div><div class="n" style="left:448.0px;top:334px">23</div><div class="n" style="left:484.8px;top:334px">24</div><div class="n" style="left:521.6px;top:334px">25</div><div class="n" style="left:558.4px;top:334px">26</div><div class="n" style="left:595.2px;top:334px">27</div><div class="n" style="left:632.0px;top:334px">28</div><div class="n" style="left:668.8px;top:334px">29</div><div class="n" style="left:448.0px;top:359px">30</div><div class="n" style="left:484.8px;top:359px">31</div><div class="n" style="left:521.6px;top:359px">1</div><div class="n" style="left:558.4px;top:359px">2</div><div class="n" style="left:595.2px;top:359px">3</div><div class="n" style="left:632.0px;top:359px">4</div><div class="n" style="left:668.8px;top:359px">5</div><div class="t" style="left:180px;top:385px;font-size:11.7px">訪問日を○、1日に2回以上訪問した日は◎、理学療法士・作業療法士または言語聴覚士による</div><div class="t" style="left:180px;top:401px;font-size:11.7px">訪問看護を実施した場合は◇、長時間訪問看護加算を算定した日は□、特別訪問看護指示書に</div><div class="t" style="left:180px;top:416px;font-size:11.7px">基づく訪問看護を実施した日は△、緊急時訪問を行った日は×印とする。</div><div class="t" style="left:178px;top:529px;">衛生材料等の名称：</div><div class="t" style="left:178px;top:542px;">使用及び交換頻度：</div><div class="t" style="left:178px;top:555px;">使用量：</div><div class="t" style="left:178px;top:582px;">衛生材料等（種類・サイズ・必要量等）の変更の必要性： □有 □無</div><div class="t" style="left:178px;top:595px;">変更内容：</div><div class="t" style="left:44px;top:623px;">特記すべき事項（頻回に訪問看護が必要な理由を含む）</div><div class="t" style="left:44px;top:637px;">練習中</div><div class="t" style="left:32px;top:723px;font-size:12.2px">上記の通り、指定訪問看護の実施について報告いたします。</div><div class="t" style="left:40px;top:751px;">令和7年09月01日</div><div class="t" style="left:40px;top:779px;">カルテクリニック</div><div class="t" style="left:40px;top:794px;">テスト医師 先生</div><div class="t" style="left:376px;top:751px;">カルテ訪問看護ステーション</div><div class="t" style="left:376px;top:765px;font-size:12px">〒100-0002 東京都千代田区皇居外苑1-1-12（9月1日以降：</div><div class="t" style="left:376px;top:779px;font-size:12px">東京都千代田区皇居外苑1-1-2に移転します。）</div><div class="t" style="left:376px;top:794px;font-size:12px">TEL 03-0000-1111 / FAX 03-1111-2222</div><div class="t" style="left:376px;top:830px;font-size:12.4px;font-weight:bold">管理者　カルテ一郎</div><div class="t" style="left:376px;top:852px;font-size:12.4px;font-weight:bold">作成者　看護師　看護太郎</div><div class="stamp">印</div></div></div></div>
<div class="thumblabel" style="top:536.65px">4</div>
        </div>
        <div class="vscroll" id="sidescroll"><i class="up"></i><b style="top:12.75px;height:117.5px"></b><i class="down"></i></div>
        <div id="main">
          <div class="mpage" style="top:1px"><div class="doc"><div class="t" style="left:316px;top:43px;font-size:16.5px;font-weight:bold;letter-spacing:.3px">訪問看護報告書</div><div class="t" style="left:622px;top:78px;font-size:11px">令和7年09月01日</div><div class="h" style="top:94.5px"></div><div class="h" style="top:119.5px"></div><div class="h" style="top:144.5px"></div><div class="h" style="top:167.5px"></div><div class="h" style="top:191.5px"></div><div class="h" style="top:435.5px"></div><div class="h" style="top:461.5px"></div><div class="h" style="top:500.5px"></div><div class="h" style="top:521.5px"></div><div class="h" style="top:573.5px"></div><div class="h" style="top:614.5px"></div><div class="h" style="top:705.5px"></div><div class="v" style="left:30.5px;top:94.5px;height:614px"></div><div class="v" style="left:712px;top:94.5px;height:614px"></div><div class="v" style="left:168.5px;top:94.5px;height:523px"></div><div class="t" style="left:38px;top:102.5px;">利用者氏名</div><div class="t" style="left:38px;top:127.5px;">生年月日</div><div class="t" style="left:38px;top:151.5px;">要介護認定の状況</div><div class="t" style="left:38px;top:175px;">住　所</div><div class="t" style="left:38px;top:199px;">訪問日</div><div class="t" style="left:38px;top:444px;">病状の経過</div><div class="t" style="left:38px;top:470px;">看護・リハビリテーショ</div><div class="t" style="left:38px;top:483px;">ンの内容</div><div class="t" style="left:38px;top:506.5px;">家庭での介護状況</div><div class="t" style="left:38px;top:529px;">衛生材料等の使用量お</div><div class="t" style="left:38px;top:542px;">よび使用状況</div><div class="t" style="left:38px;top:582px;">衛生材料等の種類・量</div><div class="t" style="left:38px;top:595px;">の変更</div><div class="t" style="left:178px;top:102.5px;">練習テスト　様</div><div class="t" style="left:178px;top:127.5px;">昭和30年01月01日 （70歳）</div><div class="t" style="left:178px;top:151.5px;font-size:12.6px">□該当無 □要支援1 □要支援2 □要介護1 □要介護2 □要介護3 □要介護4 □要介護5</div><div class="t" style="left:180px;top:204px;font-size:9.5px">2025年08月</div><div class="t" style="left:448px;top:204px;font-size:9.5px">2025年09月</div><div class="dot" style="left:191.5px;top:220px"></div><div class="dot" style="left:228.3px;top:220px"></div><div class="dot" style="left:265.1px;top:220px"></div><div class="dot" style="left:301.9px;top:220px"></div><div class="dot" style="left:338.7px;top:220px"></div><div class="dot" style="left:375.5px;top:220px"></div><div class="dot" style="left:412.3px;top:220px"></div><div class="n" style="left:182.0px;top:240px">26</div><div class="n" style="left:218.8px;top:240px">27</div><div class="n" style="left:255.6px;top:240px">28</div><div class="n" style="left:292.4px;top:240px">29</div><div class="n" style="left:329.2px;top:240px">30</div><div class="n" style="left:366.0px;top:240px">31</div><div class="n" style="left:402.8px;top:240px">1</div><div class="n" style="left:182.0px;top:263px">2</div><div class="n" style="left:218.8px;top:263px">3</div><div class="n" style="left:255.6px;top:263px">4</div><div class="n" style="left:292.4px;top:263px">5</div><div class="n" style="left:329.2px;top:263px">6</div><div class="n" style="left:366.0px;top:263px">7</div><div class="n" style="left:402.8px;top:263px">8</div><div class="n" style="left:182.0px;top:286px">9</div><div class="n" style="left:218.8px;top:286px">10</div><div class="n" style="left:255.6px;top:286px">11</div><div class="n" style="left:292.4px;top:286px">12</div><div class="n" style="left:329.2px;top:286px">13</div><div class="n" style="left:366.0px;top:286px">14</div><div class="n" style="left:402.8px;top:286px">15</div><div class="n" style="left:182.0px;top:310px">16</div><div class="n" style="left:218.8px;top:310px">17</div><div class="n" style="left:255.6px;top:310px">18</div><div class="n" style="left:292.4px;top:310px">19</div><div class="n" style="left:329.2px;top:310px">20</div><div class="n" style="left:366.0px;top:310px">21</div><div class="n" style="left:402.8px;top:310px">22</div><div class="n" style="left:182.0px;top:334px">23</div><div class="n" style="left:218.8px;top:334px">24</div><div class="n" style="left:255.6px;top:334px">25</div><div class="n" style="left:292.4px;top:334px">26</div><div class="n" style="left:329.2px;top:334px">27</div><div class="n" style="left:366.0px;top:334px">28</div><div class="n" style="left:402.8px;top:334px">1</div><div class="dot" style="left:457.5px;top:220px"></div><div class="dot" style="left:494.3px;top:220px"></div><div class="dot" style="left:531.1px;top:220px"></div><div class="dot" style="left:567.9px;top:220px"></div><div class="dot" style="left:604.7px;top:220px"></div><div class="dot" style="left:641.5px;top:220px"></div><div class="dot" style="left:678.3px;top:220px"></div><div class="n" style="left:448.0px;top:240px">23</div><div class="n" style="left:484.8px;top:240px">24</div><div class="n" style="left:521.6px;top:240px">25</div><div class="n" style="left:558.4px;top:240px">26</div><div class="n" style="left:595.2px;top:240px">27</div><div class="n" style="left:632.0px;top:240px">28</div><div class="n" style="left:668.8px;top:240px">1</div><div class="n" style="left:448.0px;top:263px">2</div><div class="n" style="left:484.8px;top:263px">3</div><div class="n" style="left:521.6px;top:263px">4</div><div class="n" style="left:558.4px;top:263px">5</div><div class="n" style="left:595.2px;top:263px">6</div><div class="n" style="left:632.0px;top:263px">7</div><div class="n" style="left:668.8px;top:263px">8</div><div class="n" style="left:448.0px;top:286px">9</div><div class="n" style="left:484.8px;top:286px">10</div><div class="n" style="left:521.6px;top:286px">11</div><div class="n" style="left:558.4px;top:286px">12</div><div class="n" style="left:595.2px;top:286px">13</div><div class="n" style="left:632.0px;top:286px">14</div><div class="n" style="left:668.8px;top:286px">15</div><div class="n" style="left:448.0px;top:310px">16</div><div class="n" style="left:484.8px;top:310px">17</div><div class="n" style="left:521.6px;top:310px">18</div><div class="n" style="left:558.4px;top:310px">19</div><div class="n" style="left:595.2px;top:310px">20</div><div class="n" style="left:632.0px;top:310px">21</div><div class="n" style="left:668.8px;top:310px">22</div><div class="n" style="left:448.0px;top:334px">23</div><div class="n" style="left:484.8px;top:334px">24</div><div class="n" style="left:521.6px;top:334px">25</div><div class="n" style="left:558.4px;top:334px">26</div><div class="n" style="left:595.2px;top:334px">27</div><div class="n" style="left:632.0px;top:334px">28</div><div class="n" style="left:668.8px;top:334px">29</div><div class="n" style="left:448.0px;top:359px">30</div><div class="n" style="left:484.8px;top:359px">31</div><div class="n" style="left:521.6px;top:359px">1</div><div class="n" style="left:558.4px;top:359px">2</div><div class="n" style="left:595.2px;top:359px">3</div><div class="n" style="left:632.0px;top:359px">4</div><div class="n" style="left:668.8px;top:359px">5</div><div class="t" style="left:180px;top:385px;font-size:11.7px">訪問日を○、1日に2回以上訪問した日は◎、理学療法士・作業療法士または言語聴覚士による</div><div class="t" style="left:180px;top:401px;font-size:11.7px">訪問看護を実施した場合は◇、長時間訪問看護加算を算定した日は□、特別訪問看護指示書に</div><div class="t" style="left:180px;top:416px;font-size:11.7px">基づく訪問看護を実施した日は△、緊急時訪問を行った日は×印とする。</div><div class="t" style="left:178px;top:529px;">衛生材料等の名称：</div><div class="t" style="left:178px;top:542px;">使用及び交換頻度：</div><div class="t" style="left:178px;top:555px;">使用量：</div><div class="t" style="left:178px;top:582px;">衛生材料等（種類・サイズ・必要量等）の変更の必要性： □有 □無</div><div class="t" style="left:178px;top:595px;">変更内容：</div><div class="t" style="left:44px;top:623px;">特記すべき事項（頻回に訪問看護が必要な理由を含む）</div><div class="t" style="left:32px;top:723px;font-size:12.2px">上記の通り、指定訪問看護の実施について報告いたします。</div><div class="t" style="left:40px;top:751px;">令和7年09月01日</div><div class="t" style="left:40px;top:779px;">カルテクリニック</div><div class="t" style="left:40px;top:794px;">テスト医師 先生</div><div class="t" style="left:376px;top:751px;">カルテ訪問看護ステーション</div><div class="t" style="left:376px;top:765px;font-size:12px">〒100-0002 東京都千代田区皇居外苑1-1-12（9月1日以降：</div><div class="t" style="left:376px;top:779px;font-size:12px">東京都千代田区皇居外苑1-1-2に移転します。）</div><div class="t" style="left:376px;top:794px;font-size:12px">TEL 03-0000-1111 / FAX 03-1111-2222</div><div class="t" style="left:376px;top:830px;font-size:12.4px;font-weight:bold">管理者　カルテ一郎</div><div class="t" style="left:376px;top:852px;font-size:12.4px;font-weight:bold">作成者　看護師　看護太郎</div><div class="stamp">印</div></div></div>
          <div class="mpage" style="top:264px"><div class="doc"><div class="t" style="left:316px;top:43px;font-size:16.5px;font-weight:bold;letter-spacing:.3px">訪問看護報告書</div><div class="t" style="left:622px;top:78px;font-size:11px">令和7年09月01日</div><div class="h" style="top:94.5px"></div><div class="h" style="top:119.5px"></div><div class="h" style="top:144.5px"></div><div class="h" style="top:167.5px"></div><div class="h" style="top:191.5px"></div><div class="h" style="top:435.5px"></div><div class="h" style="top:461.5px"></div><div class="h" style="top:500.5px"></div><div class="h" style="top:521.5px"></div><div class="h" style="top:573.5px"></div><div class="h" style="top:614.5px"></div><div class="h" style="top:705.5px"></div><div class="v" style="left:30.5px;top:94.5px;height:614px"></div><div class="v" style="left:712px;top:94.5px;height:614px"></div><div class="v" style="left:168.5px;top:94.5px;height:523px"></div><div class="t" style="left:38px;top:102.5px;">利用者氏名</div><div class="t" style="left:38px;top:127.5px;">生年月日</div><div class="t" style="left:38px;top:151.5px;">要介護認定の状況</div><div class="t" style="left:38px;top:175px;">住　所</div><div class="t" style="left:38px;top:199px;">訪問日</div><div class="t" style="left:38px;top:444px;">病状の経過</div><div class="t" style="left:38px;top:470px;">看護・リハビリテーショ</div><div class="t" style="left:38px;top:483px;">ンの内容</div><div class="t" style="left:38px;top:506.5px;">家庭での介護状況</div><div class="t" style="left:38px;top:529px;">衛生材料等の使用量お</div><div class="t" style="left:38px;top:542px;">よび使用状況</div><div class="t" style="left:38px;top:582px;">衛生材料等の種類・量</div><div class="t" style="left:38px;top:595px;">の変更</div><div class="t" style="left:178px;top:102.5px;">練習テスト　様</div><div class="t" style="left:178px;top:127.5px;">昭和30年01月01日 （70歳）</div><div class="t" style="left:178px;top:151.5px;font-size:12.6px">□該当無 □要支援1 □要支援2 □要介護1 □要介護2 □要介護3 □要介護4 □要介護5</div><div class="t" style="left:178px;top:175px;">東京都港区テスト町0-0-0 ハイツ 1-1</div><div class="t" style="left:180px;top:204px;font-size:9.5px">2025年08月</div><div class="t" style="left:448px;top:204px;font-size:9.5px">2025年09月</div><div class="dot" style="left:191.5px;top:220px"></div><div class="dot" style="left:228.3px;top:220px"></div><div class="dot" style="left:265.1px;top:220px"></div><div class="dot" style="left:301.9px;top:220px"></div><div class="dot" style="left:338.7px;top:220px"></div><div class="dot" style="left:375.5px;top:220px"></div><div class="dot" style="left:412.3px;top:220px"></div><div class="n" style="left:182.0px;top:240px">26</div><div class="n" style="left:218.8px;top:240px">27</div><div class="n" style="left:255.6px;top:240px">28</div><div class="n" style="left:292.4px;top:240px">29</div><div class="n" style="left:329.2px;top:240px">30</div><div class="n" style="left:366.0px;top:240px">31</div><div class="n" style="left:402.8px;top:240px">1</div><div class="n" style="left:182.0px;top:263px">2</div><div class="n" style="left:218.8px;top:263px">3</div><div class="n" style="left:255.6px;top:263px">4</div><div class="n" style="left:292.4px;top:263px">5</div><div class="n" style="left:329.2px;top:263px">6</div><div class="n" style="left:366.0px;top:263px">7</div><div class="n" style="left:402.8px;top:263px">8</div><div class="n" style="left:182.0px;top:286px">9</div><div class="n" style="left:218.8px;top:286px">10</div><div class="n" style="left:255.6px;top:286px">11</div><div class="n" style="left:292.4px;top:286px">12</div><div class="n" style="left:329.2px;top:286px">13</div><div class="n" style="left:366.0px;top:286px">14</div><div class="n" style="left:402.8px;top:286px">15</div><div class="n" style="left:182.0px;top:310px">16</div><div class="n" style="left:218.8px;top:310px">17</div><div class="n" style="left:255.6px;top:310px">18</div><div class="n" style="left:292.4px;top:310px">19</div><div class="n" style="left:329.2px;top:310px">20</div><div class="n" style="left:366.0px;top:310px">21</div><div class="n" style="left:402.8px;top:310px">22</div><div class="n" style="left:182.0px;top:334px">23</div><div class="n" style="left:218.8px;top:334px">24</div><div class="n" style="left:255.6px;top:334px">25</div><div class="n" style="left:292.4px;top:334px">26</div><div class="n" style="left:329.2px;top:334px">27</div><div class="n" style="left:366.0px;top:334px">28</div><div class="n" style="left:402.8px;top:334px">1</div><div class="dot" style="left:457.5px;top:220px"></div><div class="dot" style="left:494.3px;top:220px"></div><div class="dot" style="left:531.1px;top:220px"></div><div class="dot" style="left:567.9px;top:220px"></div><div class="dot" style="left:604.7px;top:220px"></div><div class="dot" style="left:641.5px;top:220px"></div><div class="dot" style="left:678.3px;top:220px"></div><div class="n" style="left:448.0px;top:240px">23</div><div class="n" style="left:484.8px;top:240px">24</div><div class="n" style="left:521.6px;top:240px">25</div><div class="n" style="left:558.4px;top:240px">26</div><div class="n" style="left:595.2px;top:240px">27</div><div class="n" style="left:632.0px;top:240px">28</div><div class="n" style="left:668.8px;top:240px">1</div><div class="n" style="left:448.0px;top:263px">2</div><div class="n" style="left:484.8px;top:263px">3</div><div class="n" style="left:521.6px;top:263px">4</div><div class="n" style="left:558.4px;top:263px">5</div><div class="n" style="left:595.2px;top:263px">6</div><div class="n" style="left:632.0px;top:263px">7</div><div class="n" style="left:668.8px;top:263px">8</div><div class="n" style="left:448.0px;top:286px">9</div><div class="n" style="left:484.8px;top:286px">10</div><div class="n" style="left:521.6px;top:286px">11</div><div class="n" style="left:558.4px;top:286px">12</div><div class="n" style="left:595.2px;top:286px">13</div><div class="n" style="left:632.0px;top:286px">14</div><div class="n" style="left:668.8px;top:286px">15</div><div class="n" style="left:448.0px;top:310px">16</div><div class="n" style="left:484.8px;top:310px">17</div><div class="n" style="left:521.6px;top:310px">18</div><div class="n" style="left:558.4px;top:310px">19</div><div class="n" style="left:595.2px;top:310px">20</div><div class="n" style="left:632.0px;top:310px">21</div><div class="n" style="left:668.8px;top:310px">22</div><div class="n" style="left:448.0px;top:334px">23</div><div class="n" style="left:484.8px;top:334px">24</div><div class="n" style="left:521.6px;top:334px">25</div><div class="n" style="left:558.4px;top:334px">26</div><div class="n" style="left:595.2px;top:334px">27</div><div class="n" style="left:632.0px;top:334px">28</div><div class="n" style="left:668.8px;top:334px">29</div><div class="n" style="left:448.0px;top:359px">30</div><div class="n" style="left:484.8px;top:359px">31</div><div class="n" style="left:521.6px;top:359px">1</div><div class="n" style="left:558.4px;top:359px">2</div><div class="n" style="left:595.2px;top:359px">3</div><div class="n" style="left:632.0px;top:359px">4</div><div class="n" style="left:668.8px;top:359px">5</div><div class="t" style="left:180px;top:385px;font-size:11.7px">訪問日を○、1日に2回以上訪問した日は◎、理学療法士・作業療法士または言語聴覚士による</div><div class="t" style="left:180px;top:401px;font-size:11.7px">訪問看護を実施した場合は◇、長時間訪問看護加算を算定した日は□、特別訪問看護指示書に</div><div class="t" style="left:180px;top:416px;font-size:11.7px">基づく訪問看護を実施した日は△、緊急時訪問を行った日は×印とする。</div><div class="t" style="left:178px;top:529px;">衛生材料等の名称：</div><div class="t" style="left:178px;top:542px;">使用及び交換頻度：</div><div class="t" style="left:178px;top:555px;">使用量：</div><div class="t" style="left:178px;top:582px;">衛生材料等（種類・サイズ・必要量等）の変更の必要性： □有 □無</div><div class="t" style="left:178px;top:595px;">変更内容：</div><div class="t" style="left:44px;top:623px;">特記すべき事項（頻回に訪問看護が必要な理由を含む）</div><div class="t" style="left:44px;top:637px;">練習中</div><div class="t" style="left:32px;top:723px;font-size:12.2px">上記の通り、指定訪問看護の実施について報告いたします。</div><div class="t" style="left:40px;top:751px;">令和7年09月01日</div><div class="t" style="left:40px;top:779px;">カルテクリニック</div><div class="t" style="left:40px;top:794px;">テスト医師 先生</div><div class="t" style="left:376px;top:751px;">カルテ訪問看護ステーション</div><div class="t" style="left:376px;top:765px;font-size:12px">〒100-0002 東京都千代田区皇居外苑1-1-12（9月1日以降：</div><div class="t" style="left:376px;top:779px;font-size:12px">東京都千代田区皇居外苑1-1-2に移転します。）</div><div class="t" style="left:376px;top:794px;font-size:12px">TEL 03-0000-1111 / FAX 03-1111-2222</div><div class="t" style="left:376px;top:830px;font-size:12.4px;font-weight:bold">管理者　カルテ一郎</div><div class="t" style="left:376px;top:852px;font-size:12.4px;font-weight:bold">作成者　看護師　看護太郎</div><div class="stamp">印</div></div></div>
        </div>
        <div class="vscroll" id="mainscroll"><i class="up"></i><b style="top:13px;height:58px"></b><i class="down"></i></div>
      </div>
      <div id="tbl">
<div id="thead">
<div class="th" style="left:0.25px;width:18.25px"><span style="left:0;right:0;text-align:center;top:2.800px;line-height:14px;font-size:7px;font-style:italic;top:2.600px">#</span></div>
<div class="th" style="left:18.5px;width:26.00px"><span style="left:0;right:0;text-align:center;top:2.800px;line-height:14px;">同上</span></div>
<div class="th" style="left:44.5px;width:43.35px"><span style="left:0;right:0;text-align:center;top:2.800px;line-height:14px;">回転</span></div>
<div class="th" style="left:87.85px;width:93.40px"><span style="left:0;right:0;text-align:center;top:2.800px;line-height:14px;">患者名</span></div>
<div class="th" style="left:181.25px;width:92.00px"><span style="left:0;right:0;text-align:center;top:2.800px;line-height:14px;">カテゴリ</span></div>
<div class="th" style="left:273.25px;width:127.40px"><span style="left:9.800px;top:5px;line-height:14px;font-size:9px">ファイル名</span><i class="cb" style="left:67.400px;top:4.800px"></i><span style="left:79.600px;top:5px;line-height:14px;font-size:8.800px;color:#444">個別指定</span></div>
<div class="th" style="left:400.65px;width:125.85px"><span style="left:12.400px;top:5px;line-height:14px;font-size:9.600px">コメント</span><i class="cb" style="left:62.600px;top:4.800px"></i><span style="left:75.200px;top:5px;line-height:14px;font-size:8.800px;color:#444">個別指定</span></div>
<div class="th" style="left:526.5px;width:40.35px"><span style="left:0;right:0;text-align:center;top:2.800px;line-height:14px;">不要</span></div>
</div>
<div class="row" style="top:21.25px">
<div class="no">1</div>
<div class="sel" style="left:43.500px;width:33.800px"><span style="position:absolute;left:4.600px;top:0;width:15.200px;height:14.400px;line-height:14px;overflow:hidden;display:block;white-space:nowrap;font-size:10.500px;font-weight:400;color:#111"><span class="tri">▼</span>選択</span><svg width="6.6" height="4.6" viewBox="0 0 6.6 4.6"><path d="M0.700 0.800l2.600 2.600 2.600-2.600" fill="none" stroke="#111" stroke-width="1.500"/></svg></div>
<div class="inp" style="left:83.500px;width:88.400px;padding-left:1px">テスト患者１</div>
<div class="sel" style="left:177.500px;width:90.800px;padding-left:4.600px;font-size:10.100px">訪問看護指示書<svg width="6.6" height="4.6" viewBox="0 0 6.6 4.6"><path d="M0.700 0.800l2.600 2.600 2.600-2.600" fill="none" stroke="#111" stroke-width="1.500"/></svg></div>
<div class="inp dis" style="left:274.650px;width:126px;padding-left:1.600px">20250912.pdf</div>
<div class="inp dis" style="left:406.500px;width:126.250px"></div>
<i class="cb" style="left:541.500px;top:5.800px;width:9.500px;height:9.500px"></i>
</div>
<div class="row g" style="top:42.25px">
<div class="no">2</div>
<i class="cb" style="left:25.700px;top:5.800px"></i>
<div class="sel" style="left:43.500px;width:33.800px"><span style="position:absolute;left:4.600px;top:0;width:15.200px;height:14.400px;line-height:14px;overflow:hidden;display:block;white-space:nowrap;font-size:10.500px;font-weight:400;color:#111"><span class="tri">▼</span>選択</span><svg width="6.6" height="4.6" viewBox="0 0 6.6 4.6"><path d="M0.700 0.800l2.600 2.600 2.600-2.600" fill="none" stroke="#111" stroke-width="1.500"/></svg></div>
<div class="inp" style="left:83.500px;width:88.400px;padding-left:1px">テスト患者２</div>
<div class="sel" style="left:177.500px;width:90.800px;padding-left:4.600px;font-size:10.100px">訪問看護指示書<svg width="6.6" height="4.6" viewBox="0 0 6.6 4.6"><path d="M0.700 0.800l2.600 2.600 2.600-2.600" fill="none" stroke="#111" stroke-width="1.500"/></svg></div>
<div class="inp dis" style="left:274.650px;width:126px;padding-left:1.600px">20250912.pdf</div>
<div class="inp dis" style="left:406.500px;width:126.250px"></div>
<i class="cb" style="left:541.500px;top:5.800px;width:9.500px;height:9.500px"></i>
</div>
<div class="row" style="top:63.25px">
<div class="no">3</div>
<i class="cb" style="left:25.700px;top:5.800px"></i>
<div class="sel" style="left:43.500px;width:33.800px"><span style="position:absolute;left:4.600px;top:0;width:15.200px;height:14.400px;line-height:14px;overflow:hidden;display:block;white-space:nowrap;font-size:10.500px;font-weight:400;color:#111"><span class="tri">▼</span>選択</span><svg width="6.6" height="4.6" viewBox="0 0 6.6 4.6"><path d="M0.700 0.800l2.600 2.600 2.600-2.600" fill="none" stroke="#111" stroke-width="1.500"/></svg></div>
<div class="inp" style="left:83.500px;width:88.400px;padding-left:1px">テスト患者３</div>
<div class="sel" style="left:177.500px;width:90.800px;padding-left:4.600px;font-size:10.100px">訪問看護指示書<svg width="6.6" height="4.6" viewBox="0 0 6.6 4.6"><path d="M0.700 0.800l2.600 2.600 2.600-2.600" fill="none" stroke="#111" stroke-width="1.500"/></svg></div>
<div class="inp dis" style="left:274.650px;width:126px;padding-left:1.600px">20250912.pdf</div>
<div class="inp dis" style="left:406.500px;width:126.250px"></div>
<i class="cb" style="left:541.500px;top:5.800px;width:9.500px;height:9.500px"></i>
</div>
<div class="row g" style="top:84.25px">
<div class="no">4</div>
<i class="cb" style="left:25.700px;top:5.800px"></i>
<div class="sel" style="left:43.500px;width:33.800px"><span style="position:absolute;left:4.600px;top:0;width:15.200px;height:14.400px;line-height:14px;overflow:hidden;display:block;white-space:nowrap;font-size:10.500px;font-weight:400;color:#111"><span class="tri">▼</span>選択</span><svg width="6.6" height="4.6" viewBox="0 0 6.6 4.6"><path d="M0.700 0.800l2.600 2.600 2.600-2.600" fill="none" stroke="#111" stroke-width="1.500"/></svg></div>
<div class="inp" style="left:83.500px;width:88.400px;padding-left:1px">テスト患者４</div>
<div class="sel" style="left:177.500px;width:90.800px;padding-left:4.600px;font-size:10.100px">訪問看護指示書<svg width="6.6" height="4.6" viewBox="0 0 6.6 4.6"><path d="M0.700 0.800l2.600 2.600 2.600-2.600" fill="none" stroke="#111" stroke-width="1.500"/></svg></div>
<div class="inp dis" style="left:274.650px;width:126px;padding-left:1.600px">20250912.pdf</div>
<div class="inp dis" style="left:406.500px;width:126.250px"></div>
<i class="cb" style="left:541.500px;top:5.800px;width:9.500px;height:9.500px"></i>
</div>
<div class="row" style="top:105.25px">
<div class="no">5</div>
<i class="cb" style="left:25.700px;top:5.800px"></i>
<div class="sel" style="left:43.500px;width:33.800px"><span style="position:absolute;left:4.600px;top:0;width:15.200px;height:14.400px;line-height:14px;overflow:hidden;display:block;white-space:nowrap;font-size:10.500px;font-weight:400;color:#111"><span class="tri">▼</span>選択</span><svg width="6.6" height="4.6" viewBox="0 0 6.6 4.6"><path d="M0.700 0.800l2.600 2.600 2.600-2.600" fill="none" stroke="#111" stroke-width="1.500"/></svg></div>
<div class="inp" style="left:83.500px;width:88.400px;padding-left:1px">テスト患者５</div>
<div class="sel" style="left:177.500px;width:90.800px;padding-left:4.600px;font-size:10.100px">看護サマリー<svg width="6.6" height="4.6" viewBox="0 0 6.6 4.6"><path d="M0.700 0.800l2.600 2.600 2.600-2.600" fill="none" stroke="#111" stroke-width="1.500"/></svg></div>
<div class="inp dis" style="left:274.650px;width:126px;padding-left:1.600px">20250912.pdf</div>
<div class="inp dis" style="left:406.500px;width:126.250px"></div>
<i class="cb" style="left:541.500px;top:5.800px;width:9.500px;height:9.500px"></i>
</div>
<div class="row g" style="top:126.25px">
<div class="no">6</div>
<i class="cb" style="left:25.700px;top:5.800px"></i>
<div class="sel" style="left:43.500px;width:33.800px"><span style="position:absolute;left:4.600px;top:0;width:15.200px;height:14.400px;line-height:14px;overflow:hidden;display:block;white-space:nowrap;font-size:10.500px;font-weight:400;color:#111"><span class="tri">▼</span>選択</span><svg width="6.6" height="4.6" viewBox="0 0 6.6 4.6"><path d="M0.700 0.800l2.600 2.600 2.600-2.600" fill="none" stroke="#111" stroke-width="1.500"/></svg></div>
<div class="inp" style="left:83.500px;width:88.400px;padding-left:1px">テスト患者６</div>
<div class="sel" style="left:177.500px;width:90.800px;padding-left:4.600px;font-size:10.100px">看護サマリー<svg width="6.6" height="4.6" viewBox="0 0 6.6 4.6"><path d="M0.700 0.800l2.600 2.600 2.600-2.600" fill="none" stroke="#111" stroke-width="1.500"/></svg></div>
<div class="inp dis" style="left:274.650px;width:126px;padding-left:1.600px">20250912.pdf</div>
<div class="inp dis" style="left:406.500px;width:126.250px"></div>
<i class="cb" style="left:541.500px;top:5.800px;width:9.500px;height:9.500px"></i>
</div>
<div class="row" style="top:147.25px">
<div class="no">7</div>
<i class="cb" style="left:25.700px;top:5.800px"></i>
<div class="sel" style="left:43.500px;width:33.800px"><span style="position:absolute;left:4.600px;top:0;width:15.200px;height:14.400px;line-height:14px;overflow:hidden;display:block;white-space:nowrap;font-size:10.500px;font-weight:400;color:#111"><span class="tri">▼</span>選択</span><svg width="6.6" height="4.6" viewBox="0 0 6.6 4.6"><path d="M0.700 0.800l2.600 2.600 2.600-2.600" fill="none" stroke="#111" stroke-width="1.500"/></svg></div>
<div class="inp" style="left:83.500px;width:88.400px;padding-left:1px">テスト患者７</div>
<div class="sel" style="left:177.500px;width:90.800px;padding-left:4.600px;font-size:10.100px">看護サマリー<svg width="6.6" height="4.6" viewBox="0 0 6.6 4.6"><path d="M0.700 0.800l2.600 2.600 2.600-2.600" fill="none" stroke="#111" stroke-width="1.500"/></svg></div>
<div class="inp dis" style="left:274.650px;width:126px;padding-left:1.600px">20250912.pdf</div>
<div class="inp dis" style="left:406.500px;width:126.250px"></div>
<i class="cb" style="left:541.500px;top:5.800px;width:9.500px;height:9.500px"></i>
</div>
<div class="row g" style="top:168.25px">
<div class="no">8</div>
<i class="cb" style="left:25.700px;top:5.800px"></i>
<div class="sel" style="left:43.500px;width:33.800px"><span style="position:absolute;left:4.600px;top:0;width:15.200px;height:14.400px;line-height:14px;overflow:hidden;display:block;white-space:nowrap;font-size:10.500px;font-weight:400;color:#111"><span class="tri">▼</span>選択</span><svg width="6.6" height="4.6" viewBox="0 0 6.6 4.6"><path d="M0.700 0.800l2.600 2.600 2.600-2.600" fill="none" stroke="#111" stroke-width="1.500"/></svg></div>
<div class="inp" style="left:83.500px;width:88.400px;padding-left:1px">テスト患者８</div>
<div class="sel" style="left:177.500px;width:90.800px;padding-left:4.600px;font-size:10.100px">看護サマリー<svg width="6.6" height="4.6" viewBox="0 0 6.6 4.6"><path d="M0.700 0.800l2.600 2.600 2.600-2.600" fill="none" stroke="#111" stroke-width="1.500"/></svg></div>
<div class="inp dis" style="left:274.650px;width:126px;padding-left:1.600px">20250912.pdf</div>
<div class="inp dis" style="left:406.500px;width:126.250px"></div>
<i class="cb" style="left:541.500px;top:5.800px;width:9.500px;height:9.500px"></i>
</div>
<div class="row" style="top:189.25px">
<div class="no">9</div>
<i class="cb" style="left:25.700px;top:5.800px"></i>
<div class="sel" style="left:43.500px;width:33.800px"><span style="position:absolute;left:4.600px;top:0;width:15.200px;height:14.400px;line-height:14px;overflow:hidden;display:block;white-space:nowrap;font-size:10.500px;font-weight:400;color:#111"><span class="tri">▼</span>選択</span><svg width="6.6" height="4.6" viewBox="0 0 6.6 4.6"><path d="M0.700 0.800l2.600 2.600 2.600-2.600" fill="none" stroke="#111" stroke-width="1.500"/></svg></div>
<div class="inp" style="left:83.500px;width:88.400px;padding-left:1px">テスト患者９</div>
<div class="sel" style="left:177.500px;width:90.800px;padding-left:4.600px;font-size:10.100px">看護サマリー<svg width="6.6" height="4.6" viewBox="0 0 6.6 4.6"><path d="M0.700 0.800l2.600 2.600 2.600-2.600" fill="none" stroke="#111" stroke-width="1.500"/></svg></div>
<div class="inp dis" style="left:274.650px;width:126px;padding-left:1.600px">20250912.pdf</div>
<div class="inp dis" style="left:406.500px;width:126.250px"></div>
<i class="cb" style="left:541.500px;top:5.800px;width:9.500px;height:9.500px"></i>
</div>
<div class="row g" style="top:210.25px">
<div class="no">10</div>
<i class="cb" style="left:25.700px;top:5.800px"></i>
<div class="sel" style="left:43.500px;width:33.800px"><span style="position:absolute;left:4.600px;top:0;width:15.200px;height:14.400px;line-height:14px;overflow:hidden;display:block;white-space:nowrap;font-size:10.500px;font-weight:400;color:#111"><span class="tri">▼</span>選択</span><svg width="6.6" height="4.6" viewBox="0 0 6.6 4.6"><path d="M0.700 0.800l2.600 2.600 2.600-2.600" fill="none" stroke="#111" stroke-width="1.500"/></svg></div>
<div class="inp" style="left:83.500px;width:88.400px;padding-left:1px">テスト患者１０</div>
<div class="sel" style="left:177.500px;width:90.800px;padding-left:4.600px;font-size:10.100px">看護サマリー<svg width="6.6" height="4.6" viewBox="0 0 6.6 4.6"><path d="M0.700 0.800l2.600 2.600 2.600-2.600" fill="none" stroke="#111" stroke-width="1.500"/></svg></div>
<div class="inp dis" style="left:274.650px;width:126px;padding-left:1.600px">20250912.pdf</div>
<div class="inp dis" style="left:406.500px;width:126.250px"></div>
<i class="cb" style="left:541.500px;top:5.800px;width:9.500px;height:9.500px"></i>
</div>
<div class="row" style="top:231.25px">
<div class="no">11</div>
<i class="cb" style="left:25.700px;top:5.800px"></i>
<div class="sel" style="left:43.500px;width:33.800px"><span style="position:absolute;left:4.600px;top:0;width:15.200px;height:14.400px;line-height:14px;overflow:hidden;display:block;white-space:nowrap;font-size:10.500px;font-weight:400;color:#111"><span class="tri">▼</span>選択</span><svg width="6.6" height="4.6" viewBox="0 0 6.6 4.6"><path d="M0.700 0.800l2.600 2.600 2.600-2.600" fill="none" stroke="#111" stroke-width="1.500"/></svg></div>
<div class="inp" style="left:83.500px;width:88.400px;padding-left:1px">テスト患者１１</div>
<div class="sel" style="left:177.500px;width:90.800px;padding-left:4.600px;font-size:10.100px">過去の検査結果<svg width="6.6" height="4.6" viewBox="0 0 6.6 4.6"><path d="M0.700 0.800l2.600 2.600 2.600-2.600" fill="none" stroke="#111" stroke-width="1.500"/></svg></div>
<div class="inp dis" style="left:274.650px;width:126px;padding-left:1.600px">20250912.pdf</div>
<div class="inp dis" style="left:406.500px;width:126.250px"></div>
<i class="cb" style="left:541.500px;top:5.800px;width:9.500px;height:9.500px"></i>
</div>
<div class="row g" style="top:252.25px">
<div class="no">12</div>
<i class="cb" style="left:25.700px;top:5.800px"></i>
<div class="sel" style="left:43.500px;width:33.800px"><span style="position:absolute;left:4.600px;top:0;width:15.200px;height:14.400px;line-height:14px;overflow:hidden;display:block;white-space:nowrap;font-size:10.500px;font-weight:400;color:#111"><span class="tri">▼</span>選択</span><svg width="6.6" height="4.6" viewBox="0 0 6.6 4.6"><path d="M0.700 0.800l2.600 2.600 2.600-2.600" fill="none" stroke="#111" stroke-width="1.500"/></svg></div>
<div class="inp" style="left:83.500px;width:88.400px;padding-left:1px">テスト患者１２</div>
<div class="sel" style="left:177.500px;width:90.800px;padding-left:4.600px;font-size:10.100px">過去の検査結果<svg width="6.6" height="4.6" viewBox="0 0 6.6 4.6"><path d="M0.700 0.800l2.600 2.600 2.600-2.600" fill="none" stroke="#111" stroke-width="1.500"/></svg></div>
<div class="inp dis" style="left:274.650px;width:126px;padding-left:1.600px">20250912.pdf</div>
<div class="inp dis" style="left:406.500px;width:126.250px"></div>
<i class="cb" style="left:541.500px;top:5.800px;width:9.500px;height:9.500px"></i>
</div>
<div class="row" style="top:273.25px">
<div class="no">13</div>
<i class="cb" style="left:25.700px;top:5.800px"></i>
<div class="sel" style="left:43.500px;width:33.800px"><span style="position:absolute;left:4.600px;top:0;width:15.200px;height:14.400px;line-height:14px;overflow:hidden;display:block;white-space:nowrap;font-size:10.500px;font-weight:400;color:#111"><span class="tri">▼</span>選択</span><svg width="6.6" height="4.6" viewBox="0 0 6.6 4.6"><path d="M0.700 0.800l2.600 2.600 2.600-2.600" fill="none" stroke="#111" stroke-width="1.500"/></svg></div>
<div class="inp" style="left:83.500px;width:88.400px;padding-left:1px">テスト患者１３</div>
<div class="sel" style="left:177.500px;width:90.800px;padding-left:4.600px;font-size:10.100px">過去の検査結果<svg width="6.6" height="4.6" viewBox="0 0 6.6 4.6"><path d="M0.700 0.800l2.600 2.600 2.600-2.600" fill="none" stroke="#111" stroke-width="1.500"/></svg></div>
<div class="inp dis" style="left:274.650px;width:126px;padding-left:1.600px">20250912.pdf</div>
<div class="inp dis" style="left:406.500px;width:126.250px"></div>
<i class="cb" style="left:541.500px;top:5.800px;width:9.500px;height:9.500px"></i>
</div>
<div class="row g" style="top:294.25px">
<div class="no">14</div>
<i class="cb" style="left:25.700px;top:5.800px"></i>
<div class="sel" style="left:43.500px;width:33.800px"><span style="position:absolute;left:4.600px;top:0;width:15.200px;height:14.400px;line-height:14px;overflow:hidden;display:block;white-space:nowrap;font-size:10.500px;font-weight:400;color:#111"><span class="tri">▼</span>選択</span><svg width="6.6" height="4.6" viewBox="0 0 6.6 4.6"><path d="M0.700 0.800l2.600 2.600 2.600-2.600" fill="none" stroke="#111" stroke-width="1.500"/></svg></div>
<div class="inp" style="left:83.500px;width:88.400px;padding-left:1px">テスト患者１４</div>
<div class="sel" style="left:177.500px;width:90.800px;padding-left:4.600px;font-size:10.100px">同意書<svg width="6.6" height="4.6" viewBox="0 0 6.6 4.6"><path d="M0.700 0.800l2.600 2.600 2.600-2.600" fill="none" stroke="#111" stroke-width="1.500"/></svg></div>
<div class="inp dis" style="left:274.650px;width:126px;padding-left:1.600px">20250912.pdf</div>
<div class="inp dis" style="left:406.500px;width:126.250px"></div>
<i class="cb" style="left:541.500px;top:5.800px;width:9.500px;height:9.500px"></i>
</div>
<div class="row" style="top:315.25px">
<div class="no">15</div>
<i class="cb" style="left:25.700px;top:5.800px"></i>
<div class="sel" style="left:43.500px;width:33.800px"><span style="position:absolute;left:4.600px;top:0;width:15.200px;height:14.400px;line-height:14px;overflow:hidden;display:block;white-space:nowrap;font-size:10.500px;font-weight:400;color:#111"><span class="tri">▼</span>選択</span><svg width="6.6" height="4.6" viewBox="0 0 6.6 4.6"><path d="M0.700 0.800l2.600 2.600 2.600-2.600" fill="none" stroke="#111" stroke-width="1.500"/></svg></div>
<div class="inp" style="left:83.500px;width:88.400px;padding-left:1px">テスト患者１５</div>
<div class="sel" style="left:177.500px;width:90.800px;padding-left:4.600px;font-size:10.100px">同意書<svg width="6.6" height="4.6" viewBox="0 0 6.6 4.6"><path d="M0.700 0.800l2.600 2.600 2.600-2.600" fill="none" stroke="#111" stroke-width="1.500"/></svg></div>
<div class="inp dis" style="left:274.650px;width:126px;padding-left:1.600px">20250912.pdf</div>
<div class="inp dis" style="left:406.500px;width:126.250px"></div>
<i class="cb" style="left:541.500px;top:5.800px;width:9.500px;height:9.500px"></i>
</div>
<div style="position:absolute;left:0;top:336.250px;width:556px;height:5px;background:#f5f5f5"></div>
<div id="tscroll"><i class="up"></i><i class="down"></i></div>
      </div>
      <div id="foot">
<div class="fl" style="left:182.500px;top:8.200px">登録時のファイル名</div><div class="fl" style="left:275.400px;top:8.200px">:</div>
<div class="fi" style="top:7.500px">testt</div>
<div class="fl" style="left:182.500px;top:27px">登録時のコメント</div><div class="fl" style="left:275.400px;top:27px">:</div>
<div class="fi" style="top:27px"></div>
<div class="btn" style="left:242px;width:53px">一時保存</div>
<div class="btn" style="left:298px;width:52.800px">振分実行</div>
      </div>
    </div>
  </div>
</div>
</body>
</html>
